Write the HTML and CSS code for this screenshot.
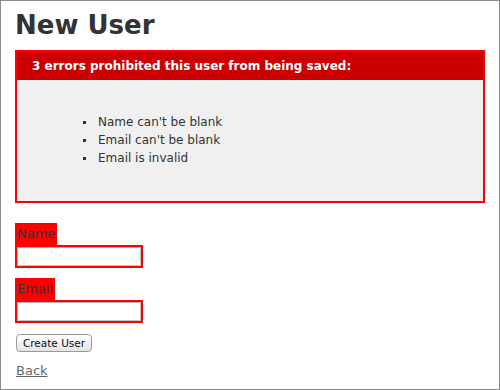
FILE: index.html
```
<!DOCTYPE html>
<html>
<head>
<meta charset="utf-8">
<title>New User</title>
<link rel="stylesheet" href="styles.css">
</head>
<body>
<div class="frame">
  <h1 class="title">New User</h1>
  <div class="error-explanation">
    <h2 class="error-head">3 errors prohibited this user from being saved:</h2>
    <ul class="error-list">
      <li>Name can't be blank</li>
      <li>Email can't be blank</li>
      <li>Email is invalid</li>
    </ul>
  </div>
  <form class="user-form">
    <div class="field">
      <div class="with-errors"><label class="field-label" for="user_name">Name</label></div>
      <div class="with-errors"><input class="text-input" type="text" id="user_name"></div>
    </div>
    <div class="field">
      <div class="with-errors"><label class="field-label" for="user_email">Email</label></div>
      <div class="with-errors"><input class="text-input" type="text" id="user_email"></div>
    </div>
    <div class="actions">
      <button class="submit" type="button">Create User</button>
    </div>
  </form>
  <a class="back-link" href="#">Back</a>
</div>
</body>
</html>
```

FILE: styles.css
```
html, body {
  margin: 0;
  padding: 0;
  background: #fff;
}

.frame {
  box-sizing: border-box;
  width: 500px;
  height: 390px;
  border: 1px solid #8c8c8c;
  padding: 9px 0 0 14px;
  color: #333;
  font-family: "DejaVu Sans", Verdana, sans-serif;
  font-size: 13px;
  line-height: 18px;
  overflow: hidden;
}

.title {
  margin: 0;
  font-size: 26px;
  line-height: 30px;
  font-weight: bold;
}

.error-explanation {
  width: 452px;
  margin: 10px 0 20px;
  border: 2px solid #f00;
  padding: 7px 7px 0;
  background: #f0f0f0;
}

.error-head {
  margin: -7px -7px 0;
  padding: 5px 5px 5px 15px;
  font-size: 12px;
  line-height: 18px;
  font-weight: bold;
  background: #c00;
  color: #fff;
}

.error-list {
  margin: 33px 0 34px;
  padding-left: 74px;
}

.error-list li {
  font-size: 12px;
  list-style: none;
}

.error-list li::before {
  content: "";
  display: inline-block;
  width: 3px;
  height: 3px;
  margin-left: -15px;
  margin-right: 12px;
  vertical-align: 2px;
  background: #333;
}

.field {
  margin-bottom: 10px;
}

.with-errors {
  display: table;
  padding: 2px;
  background: #f00;
}

.field-label {
  display: block;
}

.text-input {
  display: block;
  box-sizing: border-box;
  width: 124px;
  height: 19px;
  margin: 0;
  padding: 0 2px;
  border: 1px solid #bcc7ce;
  border-top-color: #a9b5bd;
  background: #fff;
  font-family: "DejaVu Sans", sans-serif;
  font-size: 12px;
}

.actions {
  margin-bottom: 10px;
  height: 19px;
}

.submit {
  box-sizing: border-box;
  height: 18px;
  width: 76px;
  margin: 1px 0 0 1px;
  padding: 0;
  border: 1px solid #9b9b9b;
  border-radius: 4px;
  background: linear-gradient(#ffffff, #f1f1f1 50%, #e4e4e4);
  color: #111;
  font-family: "DejaVu Sans", sans-serif;
  font-size: 10.5px;
  line-height: 16px;
  vertical-align: top;
}

.back-link {
  display: inline-block;
  margin-left: 1px;
  color: #666;
  text-decoration: underline;
}
```
